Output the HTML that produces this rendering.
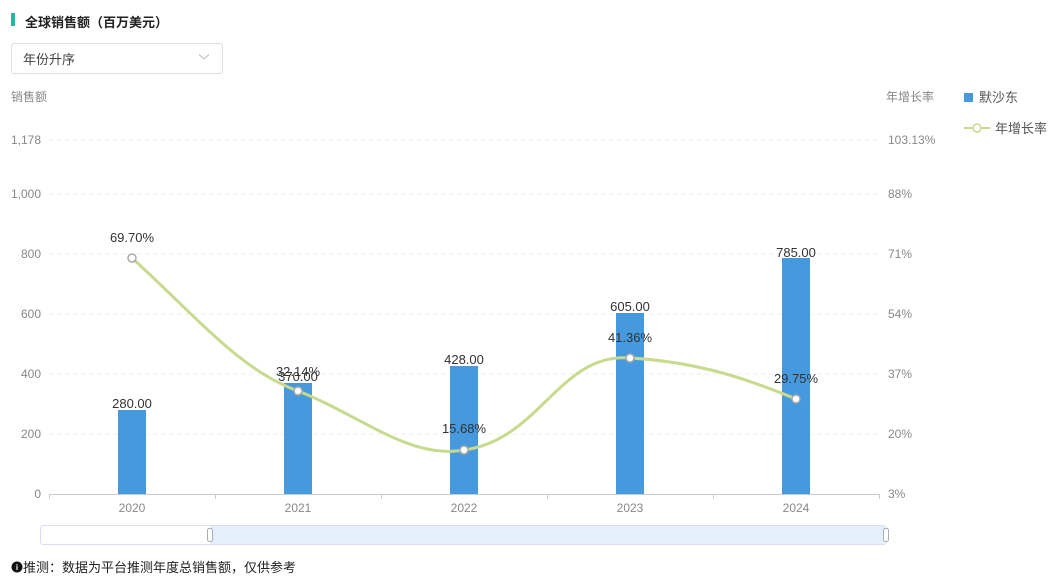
<!DOCTYPE html>
<html><head><meta charset="utf-8"><style>
body{margin:0;width:1053px;height:576px;background:#fff;font-family:"Liberation Sans","Noto Sans CJK SC",sans-serif;overflow:hidden;position:relative}
.t{position:absolute;white-space:nowrap}
</style></head><body>
<div class="t" style="left:11px;top:13px;width:4px;height:13px;background:#2bb5a0"></div>
<div class="t" style="left:25px;top:12px;font-size:13px;font-weight:bold;color:#222">全球销售额（百万美元）</div>
<div class="t" style="left:11px;top:43px;width:210px;height:29px;border:1px solid #dcdfe6;border-radius:3px"></div>
<div class="t" style="left:23px;top:49px;font-size:13px;color:#444">年份升序</div>
<svg class="t" style="left:198px;top:53px" width="12" height="8"><path d="M1 1.5 L6 6 L11 1.5" fill="none" stroke="#bbb" stroke-width="1"/></svg>
<svg class="t" style="left:0;top:0" width="1053" height="576" font-family="Liberation Sans,Noto Sans CJK SC,sans-serif">
<g font-size="12" fill="#888">
<text x="11" y="101">销售额</text>
<text x="886" y="101">年增长率</text>
<g text-anchor="end">
<text x="41" y="144">1,178</text><text x="41" y="198">1,000</text><text x="41" y="258">800</text><text x="41" y="318">600</text><text x="41" y="378">400</text><text x="41" y="438">200</text><text x="41" y="498">0</text>
</g>
<text x="888" y="144">103.13%</text><text x="888" y="198">88%</text><text x="888" y="258">71%</text><text x="888" y="318">54%</text><text x="888" y="378">37%</text><text x="888" y="438">20%</text><text x="888" y="498">3%</text>
<g text-anchor="middle"><text x="132" y="512">2020</text><text x="298" y="512">2021</text><text x="464" y="512">2022</text><text x="630" y="512">2023</text><text x="796" y="512">2024</text></g>
</g>
<g stroke="#eee" stroke-dasharray="4 4">
<line x1="49" x2="880" y1="140" y2="140"/><line x1="49" x2="880" y1="194" y2="194"/><line x1="49" x2="880" y1="254" y2="254"/><line x1="49" x2="880" y1="314" y2="314"/><line x1="49" x2="880" y1="374" y2="374"/><line x1="49" x2="880" y1="434" y2="434"/>
</g>
<line x1="49" x2="880" y1="494.5" y2="494.5" stroke="#ccc"/>
<g stroke="#ccc"><line x1="49.5" x2="49.5" y1="494" y2="499"/><line x1="215.5" x2="215.5" y1="494" y2="499"/><line x1="381.5" x2="381.5" y1="494" y2="499"/><line x1="547.5" x2="547.5" y1="494" y2="499"/><line x1="713.5" x2="713.5" y1="494" y2="499"/><line x1="879.5" x2="879.5" y1="494" y2="499"/></g>
<g fill="#4599dc">
<rect x="118" y="410" width="28" height="84"/><rect x="284" y="383" width="28" height="111"/><rect x="450" y="366" width="28" height="128"/><rect x="616" y="313" width="28" height="181"/><rect x="782" y="258" width="28" height="236"/>
</g>
<path d="M132 258 C200 320,240 370,298 391 C360 415,410 460,464 450 C540 440,560 352,630 358 C700 362,750 380,796 399" fill="none" stroke="#c8da8e" stroke-width="3"/>
<g fill="#fff" stroke="#aaa" stroke-width="1.5">
<circle cx="132" cy="258" r="4"/><circle cx="298" cy="391" r="4"/><circle cx="464" cy="450" r="4"/><circle cx="630" cy="358" r="4"/><circle cx="796" cy="399" r="4"/>
</g>
<g font-size="13" fill="#333" text-anchor="middle">
<text x="132" y="242">69.70%</text><text x="132" y="408">280.00</text>
<text x="298" y="376">32.14%</text><text x="298" y="381">370.00</text>
<text x="464" y="364">428.00</text><text x="464" y="433">15.68%</text>
<text x="630" y="311">605.00</text><text x="630" y="342">41.36%</text>
<text x="796" y="257">785.00</text><text x="796" y="383">29.75%</text>
</g>
<rect x="964" y="93" width="9" height="9" fill="#4599dc"/>
<text x="979" y="102" font-size="13" fill="#555">默沙东</text>
<line x1="964" x2="990" y1="128" y2="128" stroke="#c8da8e" stroke-width="2"/>
<circle cx="977" cy="128" r="4" fill="#fff" stroke="#c8da8e" stroke-width="1.5"/>
<text x="995" y="133" font-size="13" fill="#555">年增长率</text>
<rect x="40.5" y="525.5" width="846" height="19" rx="3" fill="#fff" stroke="#dde"/>
<rect x="210" y="526" width="676" height="18" fill="#e5effc"/>
<rect x="207.5" y="528.5" width="5" height="13" rx="2" fill="#fff" stroke="#aab"/>
<rect x="883.5" y="528.5" width="5" height="13" rx="2" fill="#fff" stroke="#aab"/>
<circle cx="17" cy="567" r="5.5" fill="#111"/><text x="17" y="570" font-size="8" fill="#fff" text-anchor="middle" font-weight="bold">i</text>
<text x="23" y="572" font-size="13" fill="#222">推测：数据为平台推测年度总销售额，仅供参考</text>
</svg>
</body></html>
